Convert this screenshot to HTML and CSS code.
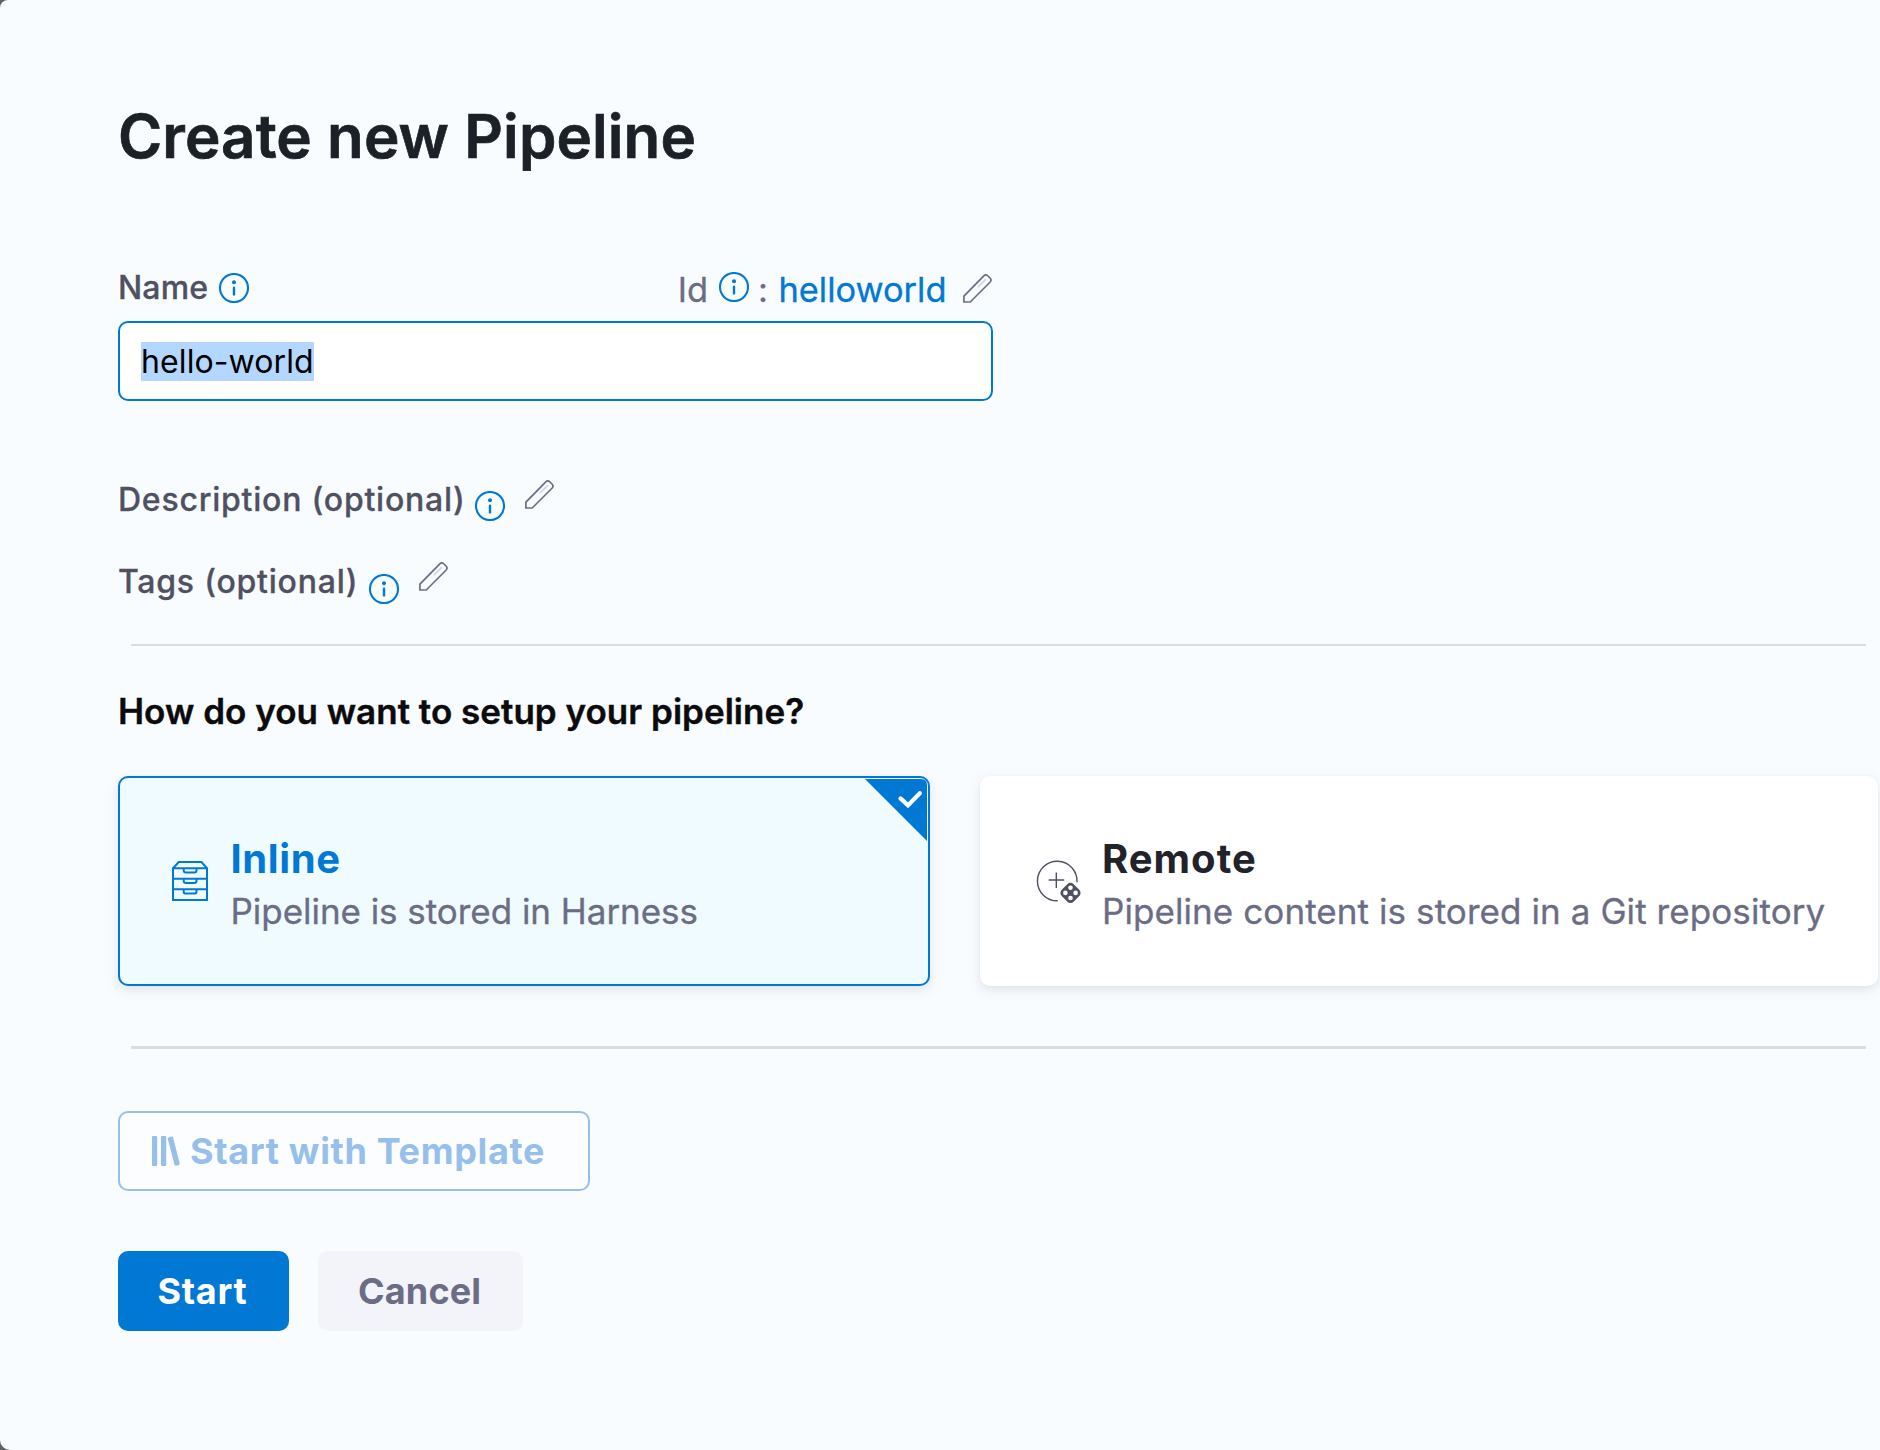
FILE: index.html
```html
<!DOCTYPE html>
<html lang="en">
<head>
<meta charset="utf-8">
<title>Create new Pipeline</title>
<link rel="stylesheet" href="styles.css">
</head>
<body>
<svg class="defs" width="0" height="0" aria-hidden="true">
  <symbol id="info" viewBox="0 0 30 30">
    <circle cx="15" cy="15" r="14" fill="none" stroke="currentColor" stroke-width="2.1"/>
    <circle cx="15" cy="9.2" r="2" fill="currentColor"/>
    <path d="M15 14.8V21.4" stroke="currentColor" stroke-width="2.4" stroke-linecap="round"/>
  </symbol>
  <symbol id="pencil" viewBox="0 0 29 29">
    <path d="M.9 28V22.2L20.6 2.1Q22.4.2 24.4 1.5L27 4Q28.9 6 27.2 8L7.2 28Z" fill="none" stroke="currentColor" stroke-width="1.7" stroke-linejoin="round"/>
    <path d="M14.8 13.2L23 5.2" stroke="#d5d6e0" stroke-width="1.8"/>
  </symbol>
</svg>
<main class="dialog">
  <h1 class="title">Create new Pipeline</h1>

  <div class="name-row">
    <label class="label" for="name">Name</label>
    <svg class="info info-name"><use href="#info"/></svg>
    <div class="id-group">
      <span>Id</span>
      <svg class="info info-id"><use href="#info"/></svg>
      <span class="colon">:</span>
      <span class="id-value">helloworld</span>
      <svg class="pencil pencil-id"><use href="#pencil"/></svg>
    </div>
  </div>
  <div class="input" id="name"><span class="selected">hello-world</span></div>

  <div class="optional description">
    <span class="label wide">Description (optional)</span>
    <svg class="info"><use href="#info"/></svg>
    <svg class="pencil"><use href="#pencil"/></svg>
  </div>
  <div class="optional tags">
    <span class="label wide">Tags (optional)</span>
    <svg class="info"><use href="#info"/></svg>
    <svg class="pencil"><use href="#pencil"/></svg>
  </div>

  <hr class="rule">
  <h2 class="question">How do you want to setup your pipeline?</h2>

  <div class="cards">
    <section class="card selected-card">
      <svg class="card-icon" width="36" height="40" viewBox="0 0 36 40" fill="none" stroke="currentColor" stroke-width="2">
        <path d="M1 7.2L6.8 1H29.4L35 7.2V39H1ZM1 7.2H35M1 17.8H35M1 28.2H35"/>
        <path d="M11.7 7.2V9.4Q11.7 11.4 13.9 11.4H22.3Q24.5 11.4 24.5 9.4V7.2M11.7 17.8V20Q11.7 22 13.9 22H22.3Q24.5 22 24.5 20V17.8M11.7 28.2V30.4Q11.7 32.6 13.9 32.6H22.3Q24.5 32.6 24.5 30.4V28.2"/>
      </svg>
      <div class="card-text">
        <h3 class="card-title">Inline</h3>
        <p class="card-desc">Pipeline is stored in Harness</p>
      </div>
      <svg class="corner" width="62" height="62" viewBox="0 0 62 62">
        <path d="M0 0H56Q62 0 62 6V62Z" fill="#0278d5"/>
        <path d="M35.5 19.4L43 26.4L54.8 14.2" fill="none" stroke="#fff" stroke-width="4.2" stroke-linecap="round"/>
      </svg>
    </section>
    <section class="card remote-card">
      <svg class="card-icon" width="45" height="44" viewBox="0 0 45 44">
        <path d="M41 22.2A19.8 19.8 0 1 0 21.7 40.8" fill="none" stroke="currentColor" stroke-width="1.4"/>
        <path d="M12.7 20H28.2M20.3 12.4V27.9" stroke="currentColor" stroke-width="1.4"/>
        <rect x="26.1" y="24.5" width="16.8" height="16.8" rx="4.4" transform="rotate(45 34.5 32.9)" fill="currentColor"/>
        <g fill="#fff"><circle cx="34.5" cy="27.8" r="2.3"/><circle cx="34.5" cy="38" r="2.3"/><circle cx="29.4" cy="32.9" r="2.3"/><circle cx="39.6" cy="32.9" r="2.3"/></g>
      </svg>
      <div class="card-text">
        <h3 class="card-title">Remote</h3>
        <p class="card-desc">Pipeline content is stored in a Git repository</p>
      </div>
    </section>
  </div>

  <hr class="rule rule-bottom">

  <button class="btn template">
    <svg width="29" height="30" viewBox="0 0 29 30" fill="currentColor">
      <rect x="0" y="0" width="5.2" height="30" rx="1"/>
      <rect x="9" y="0" width="5.2" height="30" rx="1"/>
      <path d="M16.6 1.4L19.8.6Q20.8.4 21.1 1.4L27.7 27.6Q27.9 28.6 26.9 28.9L23.9 29.8Q22.9 30 22.6 29L15.7 2.6Q15.5 1.7 16.6 1.4Z"/>
    </svg>
    <span>Start with Template</span>
  </button>
  <div class="actions">
    <button class="btn start">Start</button>
    <button class="btn cancel">Cancel</button>
  </div>
</main>
</body>
</html>
```

FILE: styles.css
```css
* {
  box-sizing: border-box;
}

html {
  background: #5f6062;
}

body {
  margin: 0;
  width: 1880px;
  height: 1450px;
  overflow: hidden;
  font-family: Inter, "Liberation Sans", sans-serif;
  color: #22222a;
}

h1, h2, h3, p {
  margin: 0;
}

svg {
  display: block;
  flex: none;
}

.defs {
  position: absolute;
}

.dialog {
  height: 1450px;
  padding: 100px 0 0 118px;
  background: #f9fcff;
  border-radius: 8px 0 0 10px;
  overflow: hidden;
}

.title {
  font-size: 60px;
  line-height: 72px;
  font-weight: 600;
  letter-spacing: .1px;
  color: #1b2127;
  -webkit-text-stroke: .7px currentColor;
}

.name-row {
  display: flex;
  align-items: flex-start;
  width: 875px;
  height: 54px;
  margin-top: 95px;
}

.label {
  padding-top: 1px;
  font-size: 32px;
  line-height: 40px;
  font-weight: 500;
  letter-spacing: .17px;
  color: #4f5162;
  -webkit-text-stroke: .3px currentColor;
}

.wide {
  letter-spacing: .77px;
}

.info {
  width: 30px;
  height: 30px;
  color: #0278d5;
}

.pencil {
  width: 29px;
  height: 29px;
  color: #6b6d85;
}

.info-name {
  margin: 6px 0 0 10.5px;
}

.id-group {
  display: flex;
  align-items: flex-start;
  margin-left: auto;
  padding-top: 3px;
  font-size: 34.4px;
  line-height: 40px;
  color: #6b6d85;
  -webkit-text-stroke: .3px currentColor;
}

.info-id {
  margin: 2px 9px 0 11px;
}

.colon {
  width: 20.5px;
}

.id-value {
  color: #0278d5;
}

.pencil-id {
  margin: 4px 1.5px 0 16px;
}

.input {
  display: flex;
  align-items: center;
  width: 875px;
  height: 80px;
  padding: 0 21px;
  border: 2px solid #0278d5;
  border-radius: 10px;
  background: #fff;
  color: #000;
  font-size: 32px;
  letter-spacing: .1px;
}

.selected {
  line-height: 39px;
  background: #b3d7ff;
}

.optional {
  display: flex;
  align-items: flex-start;
  height: 40px;
}

.description {
  margin-top: 78px;
}

.tags {
  margin-top: 42px;
}

.optional .info {
  margin: 12px 0 0 9px;
}

.tags .info {
  margin: 13px 0 0 11px;
}

.optional .pencil {
  margin: 1px 0 0 20px;
}

.rule {
  width: 1735px;
  height: 2px;
  margin: 43px 0 0 13px;
  border: 0;
  background: #d9dde2;
}

.question {
  margin-top: 45px;
  font-size: 35px;
  line-height: 40px;
  font-weight: 600;
  letter-spacing: .02px;
  color: #0b0b0d;
  -webkit-text-stroke: .4px currentColor;
}

.cards {
  display: flex;
  gap: 50px;
  margin-top: 45px;
}

.card {
  position: relative;
  display: flex;
  flex: none;
  align-items: flex-start;
  height: 210px;
  border-radius: 10px;
  background: #fff;
  box-shadow: 0 0 2px rgba(40, 41, 61, .04), 0 4px 12px rgba(96, 97, 112, .16);
}

.selected-card {
  width: 812px;
  padding: 57px 0 0 52px;
  border: 2px solid #0278d5;
  background: #effbff;
}

.remote-card {
  width: 898px;
  padding: 59px 0 0 56px;
}

.selected-card .card-icon {
  margin-top: 26px;
  color: #0278d5;
}

.remote-card .card-icon {
  margin-top: 25px;
  color: #4f5162;
}

.selected-card .card-text {
  margin-left: 22.5px;
}

.remote-card .card-text {
  margin-left: 21px;
}

.card-title {
  font-size: 40px;
  line-height: 48px;
  font-weight: 700;
  letter-spacing: 1px;
}

.selected-card .card-title {
  letter-spacing: .6px;
  color: #0278d5;
}

.card-desc {
  font-size: 35px;
  line-height: 44px;
  margin-top: 6px;
  letter-spacing: -.04px;
  color: #6b6d85;
  -webkit-text-stroke: .3px currentColor;
}

.remote-card .card-desc {
  letter-spacing: .08px;
}

/* selection marker pinned to the card corner */
.corner {
  position: absolute;
  top: 1px;
  right: 1px;
}

.rule-bottom {
  height: 3px;
  margin-top: 60px;
}

.btn {
  display: flex;
  align-items: center;
  height: 80px;
  padding: 0;
  border: 0;
  border-radius: 10px;
  font-family: inherit;
  font-size: 36px;
  line-height: 44px;
  font-weight: 700;
  letter-spacing: .7px;
}

.template {
  width: 472px;
  margin-top: 62px;
  padding-left: 32px;
  gap: 9px;
  border: 2px solid #97bfec;
  background: #fcfdff;
  color: #97bfec;
  letter-spacing: .66px;
}

.actions {
  display: flex;
  gap: 29px;
  margin-top: 60px;
}

.start {
  width: 171px;
  padding-left: 39.5px;
  background: #0278d5;
  color: #fff;
}

.cancel {
  width: 205px;
  padding-left: 40px;
  background: #f3f3fa;
  color: #6b6d85;
  letter-spacing: .15px;
}
```
